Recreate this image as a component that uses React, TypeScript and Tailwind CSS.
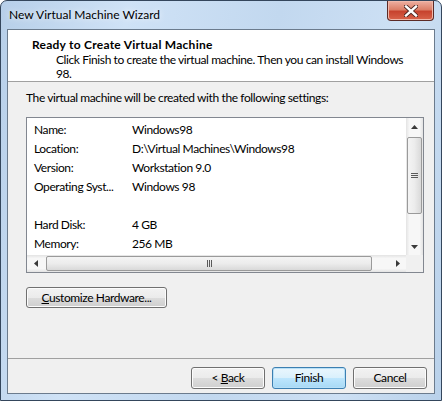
import React from 'react'

const font = { fontFamily: 'Lato, "Noto Sans", sans-serif' }

function Arrow({ dir }: { dir: 'up' | 'down' | 'left' | 'right' }) {
  const pts = {
    up: '0,4 3.5,0 7,4',
    down: '0,0 3.5,4 7,0',
    left: '4,0 0,3.5 4,7',
    right: '0,0 4,3.5 0,7',
  }[dir]
  const vert = dir === 'up' || dir === 'down'
  return (
    <svg width={vert ? 7 : 4} height={vert ? 4 : 7} viewBox={vert ? '0 0 7 4' : '0 0 4 7'}>
      <polygon points={pts} fill="#3a3a3a" />
    </svg>
  )
}

function WinButton({
  children,
  primary = false,
  className = '',
}: {
  children: React.ReactNode
  primary?: boolean
  className?: string
}) {
  return (
    <button
      type="button"
      className={`flex items-center justify-center rounded-[3px] border text-[12px] leading-none tracking-[-0.4px] text-black ${
        primary
          ? 'border-[#3c7fb1] bg-[linear-gradient(#eaf6fd_0%,#d9f0fc_50%,#bee6fd_50%,#a7d9f5_100%)] shadow-[inset_0_0_0_1px_#b8e0f7]'
          : 'border-[#707070] bg-[linear-gradient(#f2f2f2_0%,#ebebeb_50%,#dddddd_50%,#cfcfcf_100%)] shadow-[inset_0_0_0_1px_#fcfcfc]'
      } ${className}`}
    >
      {children}
    </button>
  )
}

const settings: [string, string][] = [
  ['Name:', 'Windows98'],
  ['Location:', 'D:\\Virtual Machines\\Windows98'],
  ['Version:', 'Workstation 9.0'],
  ['Operating Syst...', 'Windows 98'],
  ['', ''],
  ['Hard Disk:', '4 GB'],
  ['Memory:', '256 MB'],
]

export default function App() {
  return (
    <div
      style={font}
      className="flex h-[401px] w-[442px] flex-col rounded-t-[7px] border border-[#34465c] bg-[linear-gradient(100deg,#b7cfe9_0%,#cfe2f6_25%,#c2d8ef_55%,#cde0f4_80%,#b9d1ea_100%)] px-[6px] pb-[6px]"
    >
      {/* Title bar */}
      <div className="flex h-[28px] items-start justify-between">
        <div className="pl-[2px] pt-[6px] text-[12px] leading-[15px] text-black [text-shadow:0_0_6px_#ffffff]">
          New Virtual Machine Wizard
        </div>
        <div className="mr-[1px] flex h-[20px] w-[47px] items-center justify-center rounded-b-[4px] border border-t-0 border-[#5b2a26] bg-[linear-gradient(#eeb0a2_0%,#dc7f68_45%,#c7432e_55%,#d8634a_100%)] shadow-[inset_0_0_0_1px_#f0b8aa]">
          <svg width="14" height="12" viewBox="0 0 14 12">
            <path d="M2 1.5 L12 10.5 M12 1.5 L2 10.5" stroke="#4a2420" strokeWidth="4.2" strokeLinecap="square" />
            <path d="M2 1.5 L12 10.5 M12 1.5 L2 10.5" stroke="#ffffff" strokeWidth="2.4" strokeLinecap="square" />
          </svg>
        </div>
      </div>

      {/* Client area */}
      <div className="flex h-[365px] flex-col border border-[#6b7b8d] bg-[#f0f0f0] text-[12px] tracking-[-0.4px] text-black">
        {/* Header */}
        <div className="h-[51px] bg-white pt-[7px]">
          <div className="pl-[24px] font-bold leading-[15px] tracking-[0.25px]">Ready to Create Virtual Machine</div>
          <div className="mt-px pl-[48px] leading-[14px]">
            Click Finish to create the virtual machine. Then you can install Windows
            <br />
            98.
          </div>
        </div>
        <div className="h-px bg-[#a0a0a0]" />

        {/* Body */}
        <div className="h-[276px] pl-[18px] pt-[8px]">
          <div className="leading-[15px]">The virtual machine will be created with the following settings:</div>

          <div className="mt-[12px] grid h-[156px] w-[398px] grid-cols-[1fr_17px] grid-rows-[1fr_17px] border border-[#828790] bg-white">
            <div className="overflow-hidden pl-[7px] pt-[2px]">
              {settings.map(([label, value], i) => (
                <div key={i} className="flex h-[19px] items-center whitespace-nowrap leading-[19px]">
                  <span className="w-[98px]">{label}</span>
                  <span>{value}</span>
                </div>
              ))}
            </div>

            {/* Vertical scrollbar */}
            <div className="flex flex-col bg-[linear-gradient(90deg,#e3e3e3,#f7f7f7_20%,#f7f7f7_80%,#e3e3e3)]">
              <div className="flex h-[17px] items-center justify-center">
                <Arrow dir="up" />
              </div>
              <div className="mx-px mt-[2px] flex h-[77px] flex-col items-center justify-center gap-[1px] rounded-[2px] border border-[#9a9a9a] bg-[linear-gradient(90deg,#f4f4f4_0%,#ececec_50%,#d9d9d9_100%)]">
                <div className="h-px w-[7px] bg-[#5a5a5a]" />
                <div className="h-px w-[7px] bg-[#5a5a5a]" />
                <div className="h-px w-[7px] bg-[#5a5a5a]" />
              </div>
              <div className="flex-1" />
              <div className="flex h-[17px] items-center justify-center">
                <Arrow dir="down" />
              </div>
            </div>

            {/* Horizontal scrollbar */}
            <div className="flex items-stretch bg-[linear-gradient(#e3e3e3,#f7f7f7_20%,#f7f7f7_80%,#e3e3e3)]">
              <div className="flex w-[17px] items-center justify-center">
                <Arrow dir="left" />
              </div>
              <div className="my-px ml-[2px] flex w-[326px] items-center justify-center gap-[1px] rounded-[2px] border border-[#9a9a9a] bg-[linear-gradient(#f4f4f4_0%,#ececec_50%,#d9d9d9_100%)]">
                <div className="h-[7px] w-px bg-[#5a5a5a]" />
                <div className="h-[7px] w-px bg-[#5a5a5a]" />
                <div className="h-[7px] w-px bg-[#5a5a5a]" />
              </div>
              <div className="flex-1" />
              <div className="flex w-[17px] items-center justify-center">
                <Arrow dir="right" />
              </div>
            </div>
            <div className="bg-[#f0f0f0]" />
          </div>

          <WinButton className="mt-[14px] h-[21px] w-[141px]">
            <span>
              <span className="underline">C</span>ustomize Hardware...
            </span>
          </WinButton>
        </div>

        {/* Footer */}
        <div className="h-px bg-[#a0a0a0]" />
        <div className="flex flex-1 justify-end gap-[7px] pr-[7px] pt-[8px]">
          <WinButton className="h-[22px] w-[74px]">
            <span>
              &lt; <span className="underline">B</span>ack
            </span>
          </WinButton>
          <WinButton primary className="h-[22px] w-[74px]">
            Finish
          </WinButton>
          <WinButton className="h-[22px] w-[74px]">Cancel</WinButton>
        </div>
      </div>
    </div>
  )
}
